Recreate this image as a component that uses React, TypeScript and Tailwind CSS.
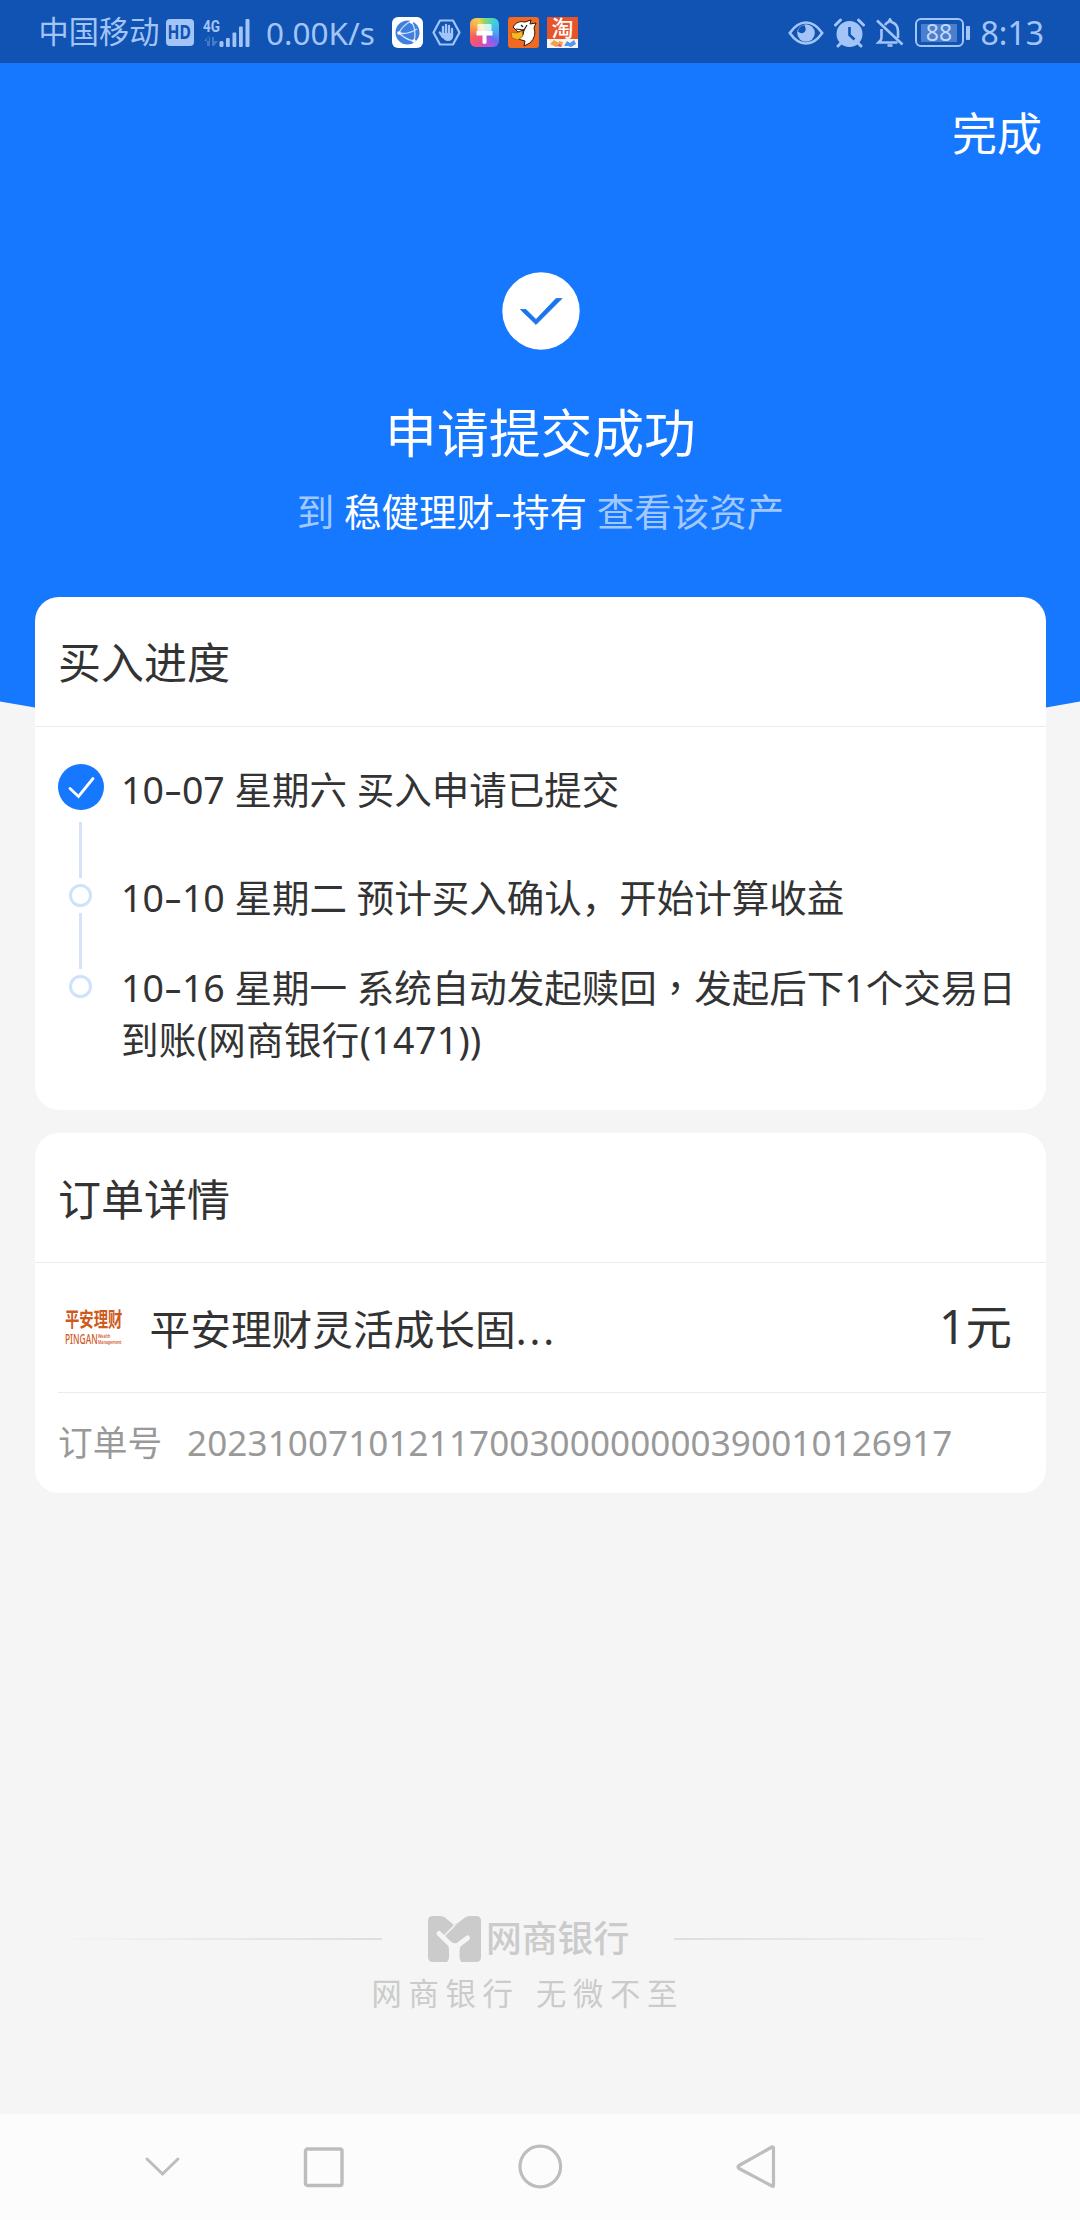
import React from "react";

const steps = [
  { month: "10", day: "07", height: "h-[107.5px]", body: "星期六 买入申请已提交" },
  { month: "10", day: "10", height: "h-[90px]", body: "星期二 预计买入确认，开始计算收益" },
];

function Dash() {
  return <span className="inline-block w-[18px] scale-x-[1.5] text-center">-</span>;
}

function StatusBar() {
  return (
    <div className="relative flex h-[63px] items-center bg-[#1053b2] pl-[38.5px] pr-[36px] pt-[2px] text-[#a3c4f7]">
      <span className="w-[127px] text-[30.2px] leading-none tracking-[0.1px]">中国移动</span>
      <span className="flex h-[27px] w-[28px] items-center justify-center rounded-[4px] bg-[#a3c4f7] text-[19px] font-bold leading-none text-[#1053b2]">
        <span className="scale-x-[0.82]">HD</span>
      </span>
      <svg className="ml-[8px] h-[32px] w-[48px]" viewBox="0 0 48 32" fill="#a3c4f7">
        <text x="1" y="14.5" fontSize="16.5" fontWeight="700" textLength="17" lengthAdjust="spacingAndGlyphs" fontFamily="Roboto, sans-serif">4G</text>
        <g opacity="0.35">
          <path d="M5 20v9h3v-9zM2 24l5-5v5zM10 20v9h2v-9zM12 29l4-5h-4z" />
        </g>
        <rect x="17.5" y="24" width="4" height="6" rx="1.5" />
        <rect x="24" y="21" width="3.8" height="9" rx="1" />
        <rect x="30.5" y="15.5" width="3.8" height="14.5" rx="1" />
        <rect x="37" y="9.5" width="3.8" height="20.5" rx="1" />
        <rect x="43.5" y="2" width="4" height="28" rx="1" />
      </svg>
      <span className="ml-[16.5px] w-[125.5px] text-[31.5px] leading-none">0.00K/s</span>

      <div className="flex items-center gap-[8px]">
        <svg className="h-[31px] w-[31px]" viewBox="0 0 31 31">
          <rect width="31" height="31" rx="6" fill="#fff" />
          <circle cx="15.5" cy="15.5" r="12" fill="#3f7fe0" />
          <g stroke="#cfe1fb" strokeWidth="1.3" fill="none">
            <path d="M19 4Q10 9 7 16Q13 22 21 24M7 16Q15 18 25 12M19 4Q25 12 22 25" />
          </g>
          <circle cx="19.5" cy="5" r="1.8" fill="#fff" />
          <circle cx="7" cy="16" r="1.8" fill="#fff" />
          <circle cx="22" cy="24" r="1.8" fill="#fff" />
        </svg>
        <svg className="h-[31px] w-[31px]" viewBox="0 0 31 31" fill="none">
          <path d="M9 3.5h13l6.5 12-6.5 12H9l-6.5-12z" stroke="#a3c4f7" strokeWidth="2.2" strokeLinejoin="round" />
          <g stroke="#a3c4f7" strokeWidth="2.3" strokeLinecap="round">
            <path d="M12 18V10M15 17V8M18 17V9M21 19V12M8.8 15.5l3 4.5" />
          </g>
          <path d="M10.8 16h11.3v3q0 5-5.5 5-3.5 0-5.8-5z" fill="#a3c4f7" />
        </svg>
        <span className="flex h-[29px] w-[29px] items-center justify-center rounded-[6px] bg-[conic-gradient(from_0deg,#8fd66a,#3fd0d8_12%,#4ba6f5_25%,#6a6cf0_35%,#c050dc_45%,#ee4f8c_58%,#f5605a_70%,#f8a04c_82%,#f3d04e_93%,#8fd66a)]">
          <svg className="h-[29px] w-[29px]" viewBox="0 0 29 29" fill="#fff">
            <path d="M7.5 6h14v7h-14z" opacity="0.75" />
            <path d="M6.5 13h16v4.5h-6v7.5q-2 2-4 0v-7.500h-6z" />
          </svg>
        </span>
        <svg className="ml-[1.5px] h-[31px] w-[31px]" viewBox="0 0 31 31">
          <rect width="31" height="31" rx="3" fill="#f26a21" />
          <path d="M5 10Q9 3 17 5l6-2-1 4 6-1-2 5q3 8-4 15l-6 3 1-5-7-2 5-4 1-5-6 2z" fill="#fff" stroke="#2b1a10" strokeWidth="1" />
          <path d="M3 15l6 1 5-2 1 5-5 4-6-2z" fill="#f5b81f" stroke="#a65c10" strokeWidth="0.8" />
          <path d="M13 8l2 2M8 12l8 1 3-5" stroke="#2b1a10" strokeWidth="1.2" fill="none" />
        </svg>
        <span className="flex h-[31px] w-[31px] flex-col items-center bg-[#e8532a]">
          <span className="h-[22px] text-[22px] font-medium leading-[21px] text-white">淘</span>
          <svg className="h-[9px] w-[31px] bg-[#fdf3ee]" viewBox="0 21 31 9">
            <path d="M3 26l4-4 5 3-3 4zM12 23l4 1-1 4-4-1z" fill="#f2a24b" />
            <path d="M17 28l3-5 3 2 4-3 2 4-5 3-3-1z" fill="#4b9be8" />
            <path d="M9 28l4-2 2 3z" fill="#e0506e" />
          </svg>
        </span>
      </div>

      <div className="ml-auto flex items-center">
        <svg className="h-[26px] w-[36px]" viewBox="0 0 36 26" fill="none">
          <path d="M1.8 13Q9 2.5 18 2.5T34.2 13Q27 23.5 18 23.5T1.8 13z" stroke="#a3c4f7" strokeWidth="2.6" />
          <circle cx="18" cy="13" r="8.8" fill="#a3c4f7" />
          <path d="M10 11.500Q13 14.500 16 12.500T16.500 5Q10.500 6 10 11.500z" fill="#1053b2" />
        </svg>
        <svg className="ml-[10px] h-[30px] w-[31px]" viewBox="0 0 31 30" fill="none">
          <circle cx="15.5" cy="16" r="13" fill="#a3c4f7" />
          <path d="M1.5 7l5-5M29.5 7l-5-5M4 28l4-4M27 28l-4-4" stroke="#a3c4f7" strokeWidth="3" strokeLinecap="round" />
          <path d="M15.5 9v8l5 4.5" stroke="#1053b2" strokeWidth="2.6" />
        </svg>
        <svg className="ml-[11px] h-[30px] w-[28px]" viewBox="0 0 28 30" fill="none" stroke="#a3c4f7" strokeWidth="2.6">
          <path d="M9 7q1.5-2.5 3.5-3l1.5-2.500 1.500 2.500Q22 6 22 13v7M5.500 11v9q0 2-3 4.500h19" />
          <path d="M1 2.500l25.500 24" />
          <path d="M11.500 27.500h5" />
        </svg>
        <div className="ml-[11px] flex h-[29px] w-[49px] items-center justify-center rounded-[6px] border-[2.5px] border-[#a3c4f7]">
          <span className="flex h-[18px] w-[36px] items-center justify-center bg-[#4b7fcd] text-[23px] leading-none text-[#c3d9fb]">88</span>
        </div>
        <span className="ml-[2px] h-[14px] w-[4px] rounded-[1px] bg-[#a3c4f7]" />
        <span className="ml-[11px] text-[32px] leading-none">8:13</span>
      </div>
    </div>
  );
}

function Header() {
  return (
    <header className="relative flex h-[534px] flex-col items-center pl-px text-white">
      <div className="mt-[37px] flex w-full justify-end pr-[38px] text-[45px] leading-[68px]">完成</div>
      <svg className="mt-[104px] h-[78px] w-[78px]" viewBox="0 0 78 78">
        <circle cx="39" cy="39" r="38.7" fill="#fff" />
        <path d="M18.500 37.500h5.500l10 10L54 26.500h6L34 52.500z" fill="#1b74ee" stroke="#1b74ee" strokeWidth="0.8" />
      </svg>
      <h1 className="mt-[43px] text-[51.8px] leading-[80px]">申请提交成功</h1>
      <p className="mt-[12px] text-[37.5px] leading-[54px] text-[#a2c9ff]">
        到 <span className="text-white">稳健理财<Dash />持有</span> 查看该资产
      </p>
    </header>
  );
}

function Progress() {
  return (
    <section className="h-[513px] rounded-[24px] bg-white">
      <h2 className="flex h-[130px] items-center border-b border-[#ebebeb] pl-[23px] pt-[2px] text-[43px] leading-none">买入进度</h2>
      <div className="flex pl-[23px] pt-[36px]">
        <div className="flex w-[46px] flex-col items-center pt-px">
          <svg className="h-[46px] w-[46px]" viewBox="0 0 46 46" fill="none">
            <circle cx="23" cy="23" r="23" fill="#1677ff" />
            <path d="M12 24.500l8.500 8L35 14.500" stroke="#fff" strokeWidth="2.8" strokeLinecap="round" />
          </svg>
          <span className="mr-px mt-[12px] h-[56px] w-[3px] bg-[#d5e2f7]" />
          <span className="mr-px mt-[6px] h-[23px] w-[23px] rounded-full border-[3px] border-[#cfe2fb]" />
          <span className="mr-px mt-[6px] h-[56px] w-[3px] bg-[#d5e2f7]" />
          <span className="mr-px mt-[6px] h-[23px] w-[23px] rounded-full border-[3px] border-[#cfe2fb]" />
        </div>
        <div className="ml-[17px] whitespace-nowrap text-[37.5px] leading-[53.3px]">
          {steps.map((s) => (
            <p key={s.day} className={s.height}>
              {s.month}<Dash />{s.day} {s.body}
            </p>
          ))}
          <p>
            10<Dash />16 星期一 系统自动发起赎回
            <span className="font-['Noto_Sans_CJK_TC'] leading-none" lang="zh-Hant">，</span>发起后下1个交易日
          </p>
          <p className="-mt-px tracking-[0.35px]">到账(网商银行(1471))</p>
        </div>
      </div>
    </section>
  );
}

function Order() {
  return (
    <section className="mt-[23px] h-[360px] rounded-[24px] bg-white">
      <h2 className="flex h-[130px] items-center border-b border-[#ebebeb] pl-[23px] pt-[4px] text-[43px] leading-none">订单详情</h2>
      <div className="ml-[23px] flex h-[130px] items-center border-b border-[#ebebeb] pr-[34px]">
        <div className="flex h-[69px] w-[69px] shrink-0 flex-col overflow-hidden pl-[6.5px] pt-[14px] text-[#cf5a1e]">
          <span className="h-[25px] w-[84px] shrink-0 origin-left scale-x-[0.7] whitespace-nowrap text-[20.5px] font-bold leading-[24px]">平安理财</span>
          <div className="flex h-[14px] items-center">
            <span className="w-[33.5px] shrink-0">
              <span className="block w-[52px] origin-left scale-x-[0.62] text-[13.5px] font-medium leading-[14px]">PINGAN</span>
            </span>
            <span className="block w-[40px] shrink-0 origin-left scale-x-[0.6] text-[6px] font-semibold leading-[6px]">Wealth<br />Management</span>
          </div>
        </div>
        <span className="ml-[22.5px] whitespace-nowrap pt-[4px] text-[40.7px] leading-none">
          平安理财灵活成长固<span className="tracking-[2.9px]">...</span>
        </span>
        <span className="ml-auto pb-[3px] text-[46.5px] leading-none">1元</span>
      </div>
      <div className="flex h-[100px] items-center pl-[23px] text-[#999]">
        <span className="text-[34.7px] leading-none">订单号</span>
        <span className="ml-[25px] pb-[2px] text-[35px] leading-none tracking-[0.12px]">20231007101211700300000000390010126917</span>
      </div>
    </section>
  );
}

function Footer() {
  return (
    <footer className="mt-auto flex h-[214px] flex-col text-[#cbcbcb]">
      <div className="flex h-[77px] items-center">
        <span className="ml-[50px] h-[2px] w-[332px] bg-gradient-to-l from-[#dedede] to-[#f5f5f5]" />
        <svg className="ml-[46px] h-[46px] w-[53px]" viewBox="0 0 53 46" fill="none">
          <path d="M5 0h7q3 0 5 1.500L26.500 9.500 37 1.500Q39 0 42 0h6q5 0 5 5v36q0 5-5 5H5q-5 0-5-5V5q0-5 5-5z" fill="#cbcbcb" />
          <path d="M27 9L16 20" stroke="#f5f5f5" strokeWidth="1.6" />
          <path d="M11 17.500L24 30H29L39.500 22" stroke="#f5f5f5" strokeWidth="5" strokeLinecap="round" />
          <path d="M18 25L27.500 27.500 34 27.500Q31.500 31 31.500 35V41q0 3 2 5H19q2-2 2-5V35Q21 29 18 25z" fill="#f5f5f5" />
        </svg>
        <span className="ml-[5px] w-[188px] text-[35.8px] font-medium leading-none">网商银行</span>
        <span className="h-[2px] w-[336px] bg-gradient-to-r from-[#dedede] to-[#f5f5f5]" />
      </div>
      <p className="ml-[371.5px] mt-[2px] flex gap-[16.5px] text-[30.3px] leading-[30px] tracking-[6.7px]">
        <span>网商银行</span>
        <span>无微不至</span>
      </p>
    </footer>
  );
}

function NavBar() {
  return (
    <nav className="flex h-[106px] items-center bg-[#fcfcfc]">
      <svg className="ml-[144px] h-[22px] w-[37px]" viewBox="0 0 37 22" fill="none" stroke="#bdbdbd" strokeWidth="3">
        <path d="M3 3l15.500 15L34 3" strokeLinecap="round" />
      </svg>
      <svg className="ml-[120px] h-[46px] w-[46px]" viewBox="0 0 46 46" fill="none" stroke="#bdbdbd" strokeWidth="3.4">
        <rect x="4.500" y="5" width="36.500" height="36.500" rx="2" />
      </svg>
      <svg className="ml-[170px] h-[46px] w-[46px]" viewBox="0 0 46 46" fill="none" stroke="#bdbdbd" strokeWidth="3.2">
        <circle cx="23.3" cy="22.500" r="20.300" />
      </svg>
      <svg className="ml-[171px] h-[46px] w-[46px]" viewBox="0 0 46 46" fill="none" stroke="#bdbdbd" strokeWidth="3.2">
        <path d="M39.500 4.500v37q0 1.500-1.500.500L5 24.500q-2-1.500 0-3L38 3q1.500-.500 1.500 1.500z" strokeLinejoin="round" />
      </svg>
    </nav>
  );
}

export default function App() {
  return (
    <div
      lang="zh-CN"
      className="relative isolate flex h-[2220px] w-[1080px] flex-col overflow-hidden bg-[#f5f5f5] font-['Noto_Sans','Noto_Sans_CJK_SC',sans-serif] text-[#333]"
    >
      <svg className="absolute left-0 top-0 -z-10 h-[760px] w-[1080px]" viewBox="0 0 1080 760">
        <path d="M0 0H1080V701.500Q540 800 0 701.500Z" fill="#1677ff" />
      </svg>
      <StatusBar />
      <Header />
      <main className="ml-[35px] w-[1011px]">
        <Progress />
        <Order />
      </main>
      <Footer />
      <NavBar />
    </div>
  );
}
